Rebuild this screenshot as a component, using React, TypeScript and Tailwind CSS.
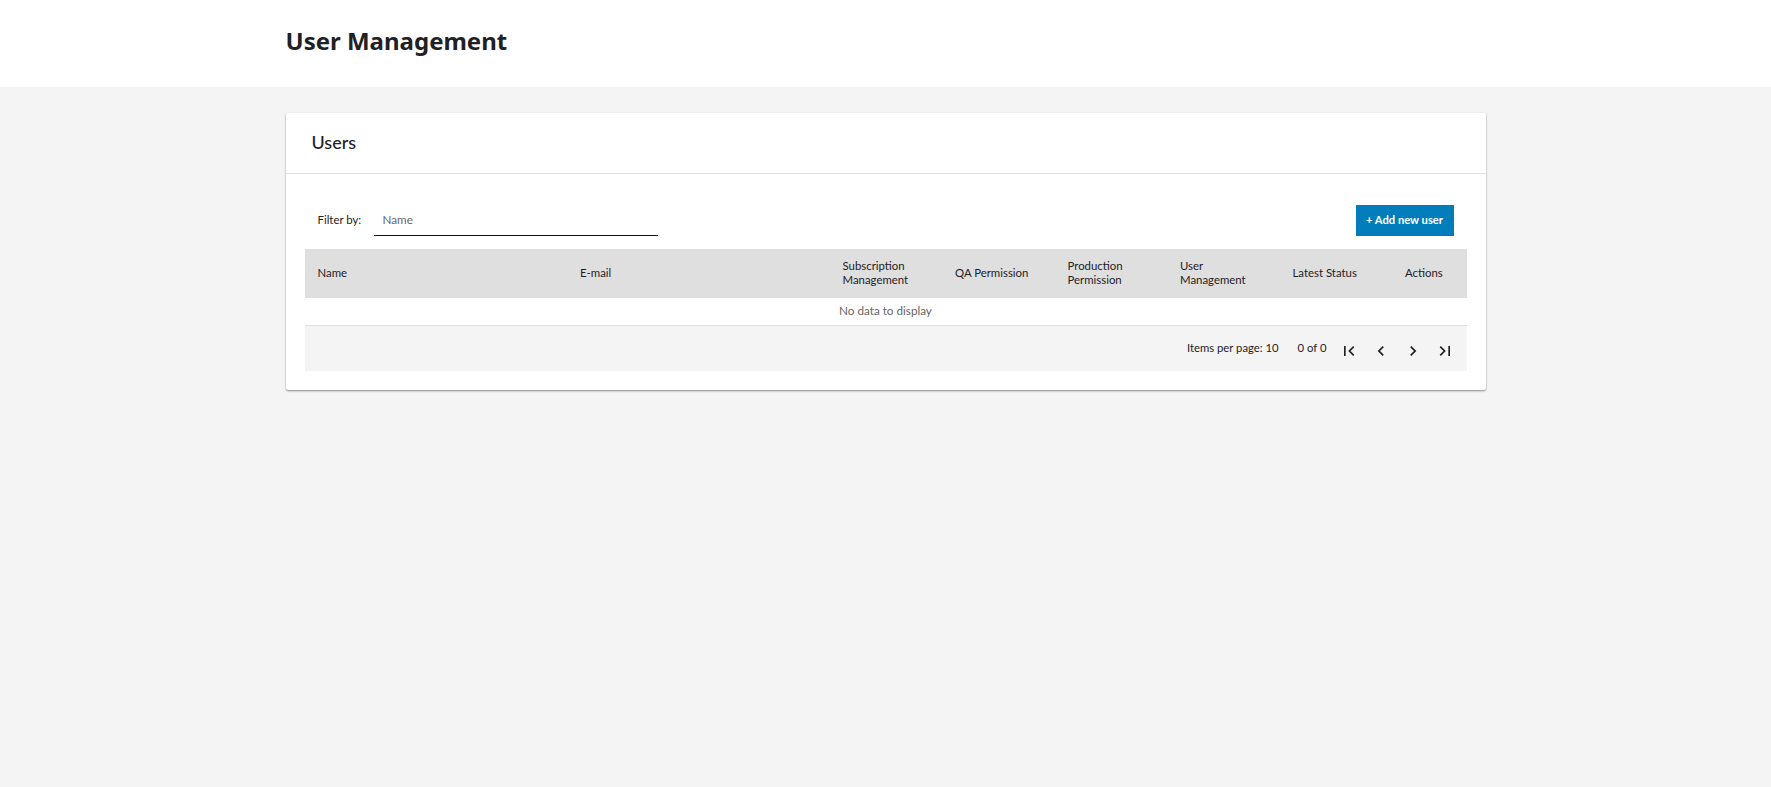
const columns = [
  { key: 'name', label: 'Name' },
  { key: 'email', label: 'E-mail' },
  { key: 'subscription', label: 'Subscription Management' },
  { key: 'qa', label: 'QA Permission' },
  { key: 'production', label: 'Production Permission' },
  { key: 'user', label: 'User Management' },
  { key: 'status', label: 'Latest Status' },
  { key: 'actions', label: 'Actions' },
]

// material style pager glyphs
const pagerIcons = [
  'M18.41 16.59L13.82 12l4.59-4.59L17 6l-6 6 6 6zM6 6h2v12H6z',
  'M15.41 7.41L14 6l-6 6 6 6 1.41-1.41L10.83 12z',
  'M10 6L8.59 7.41 13.17 12l-4.58 4.59L10 18l6-6z',
  'M5.59 7.41L10.18 12l-4.59 4.59L7 18l6-6-6-6zM16 6h2v12h-2z',
]

export default function App() {
  return (
    <div className="min-h-[787px] bg-[#f4f4f4] font-['Lato','Liberation_Sans',sans-serif] text-[#1f2125]">
      {/* Page header */}
      <header className="h-[87px] bg-white">
        <div className="mx-auto w-[1200px] pt-[23px]">
          <h1 className="font-['Noto_Sans',sans-serif] text-[24px] leading-[36px] font-bold">User Management</h1>
        </div>
      </header>

      <main className="mx-auto mt-[26px] w-[1200px] rounded-[2px] bg-white shadow-[0_1px_2px_rgba(0,0,0,0.45)]">
        <div className="flex h-[61px] items-center border-b border-[#e0e0e0] pb-[1px] pl-[26px]">
          <h2 className="text-[18px] font-medium">Users</h2>
        </div>

        <div className="px-[19px] pt-[31px] pb-[19px]">
          {/* Filter row */}
          <div className="flex h-[44px] items-start pr-[13px] pl-[13px]">
            <span className="mt-[7px] w-[56px] text-[11.4px] leading-[16px]">Filter by:</span>
            <div className="h-[31px] w-[284px] border-b border-[#111] pl-[9px] text-[11.7px] leading-[29px] text-[#666]">Name</div>
            <button className="ml-auto h-[31px] w-[98px] bg-[#007dba] text-center text-[11.2px] font-bold text-white">+ Add new user</button>
          </div>

          {/* Table */}
          <div className="grid h-[49px] grid-cols-[262.5px_262.5px_112.5px_112.5px_112.5px_112.5px_112.5px_74.5px] items-center bg-[#dfdfdf] pb-[1px] text-[11.4px] leading-[14px]">
            {columns.map((col) => (
              <div key={col.key} className={col.key === 'actions' ? 'pl-[13px] whitespace-nowrap' : 'pr-[20px] pl-[13px]'}>
                {col.label}
              </div>
            ))}
          </div>
          <div className="h-[28px] border-b border-[#dfdfdf] text-center text-[11.7px] leading-[24px] text-[#666]">No data to display</div>
          <div className="flex h-[45px] items-center justify-end bg-[#f4f4f4] pr-[6px] text-[11.3px]">
            <span className="mb-[1px]">Items per page: 10</span>
            <span className="mb-[1px] ml-[19px]">0 of 0</span>
            <div className="mt-[4px] ml-[6px] flex items-center">
              {pagerIcons.map((d) => (
                <button key={d} className="flex h-[32px] w-[32px] items-center justify-center">
                  <svg width="20" height="20" viewBox="0 0 24 24" fill="currentColor"><path d={d} /></svg>
                </button>
              ))}
            </div>
          </div>
        </div>
      </main>
    </div>
  )
}
